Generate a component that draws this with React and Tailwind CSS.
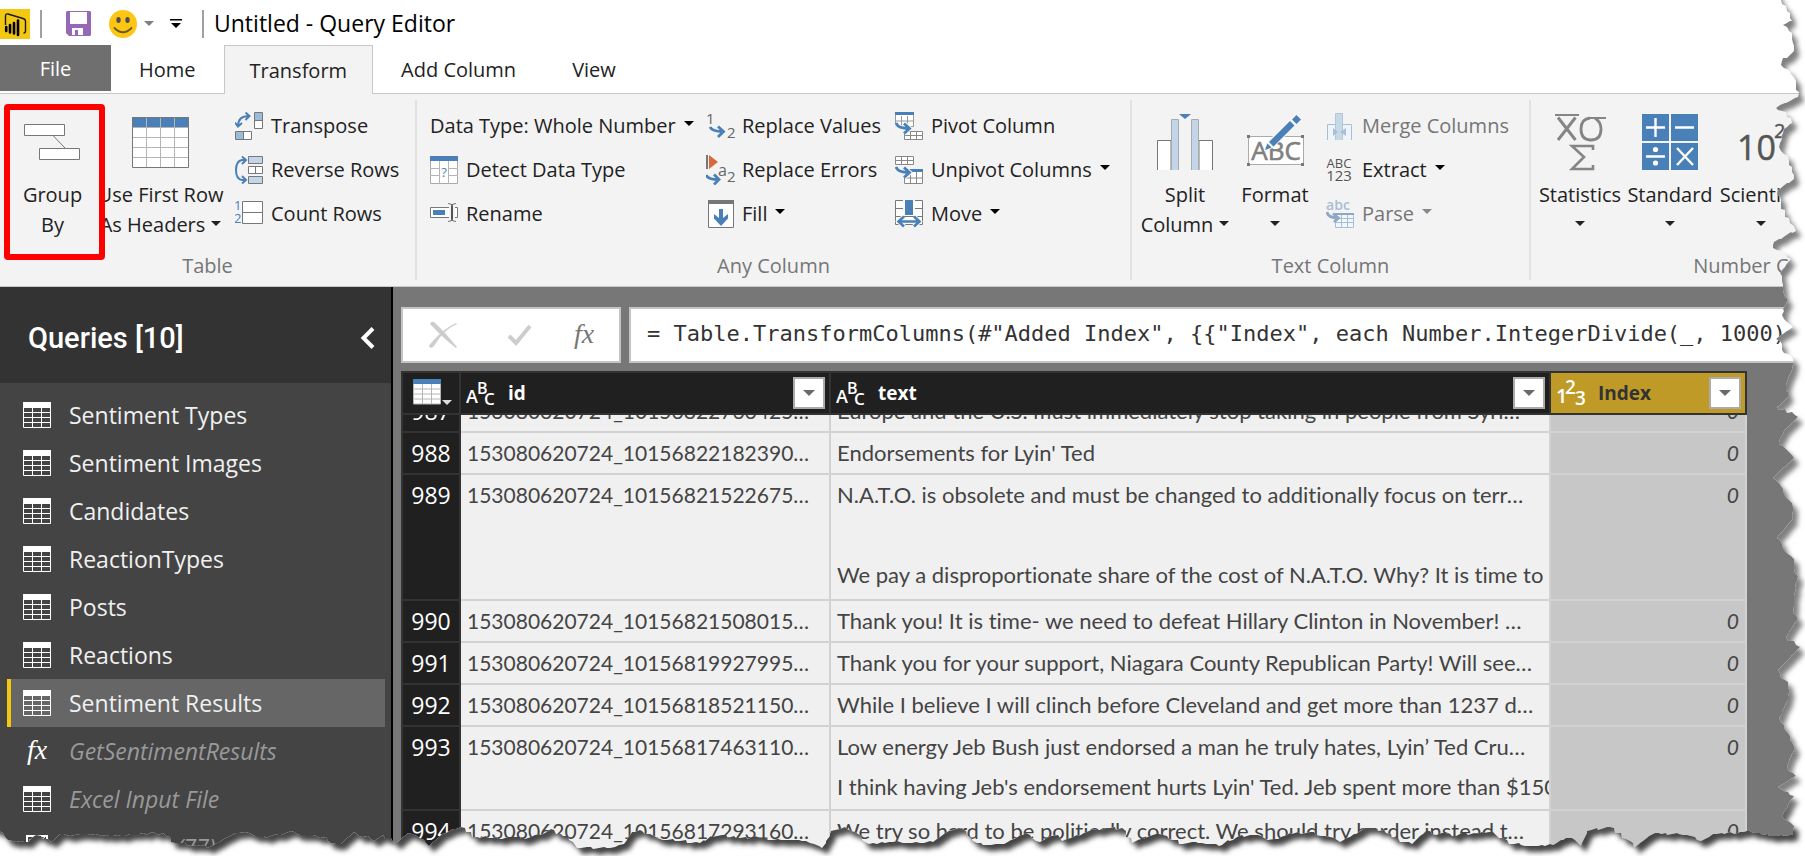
import React from 'react';

const queries = [
  { name: 'Sentiment Types', kind: 'table' },
  { name: 'Sentiment Images', kind: 'table' },
  { name: 'Candidates', kind: 'table' },
  { name: 'ReactionTypes', kind: 'table' },
  { name: 'Posts', kind: 'table' },
  { name: 'Reactions', kind: 'table' },
  { name: 'Sentiment Results', kind: 'table', selected: true },
  { name: 'GetSentimentResults', kind: 'function', disabled: true },
  { name: 'Excel Input File', kind: 'table', disabled: true },
  { name: 'Sentiment (77)', kind: 'param', disabled: true },
];

const rows = [
  { n: 987, id: '153080620724_10156822766425…', lines: ['Europe and the U.S. must immediately stop taking in people from Syri…'], size: 'clipped' },
  { n: 988, id: '153080620724_10156822182390…', lines: ["Endorsements for Lyin' Ted"] },
  {
    n: 989,
    id: '153080620724_10156821522675…',
    lines: [
      'N.A.T.O. is obsolete and must be changed to additionally focus on terr…',
      '',
      'We pay a disproportionate share of the cost of N.A.T.O. Why? It is time to renegotiate',
    ],
    size: 'tall',
  },
  { n: 990, id: '153080620724_10156821508015…', lines: ['Thank you! It is time- we need to defeat Hillary Clinton in November! …'] },
  { n: 991, id: '153080620724_10156819927995…', lines: ['Thank you for your support, Niagara County Republican Party! Will see…'] },
  { n: 992, id: '153080620724_10156818521150…', lines: ['While I believe I will clinch before Cleveland and get more than 1237 d…'] },
  {
    n: 993,
    id: '153080620724_10156817463110…',
    lines: [
      'Low energy Jeb Bush just endorsed a man he truly hates, Lyin’ Ted Cru…',
      "I think having Jeb's endorsement hurts Lyin' Ted. Jeb spent more than $150",
    ],
    size: 'double',
  },
  { n: 994, id: '153080620724_10156817293160…', lines: ['We try so hard to be politically correct. We should try harder instead t…'] },
];

const rowHeight = {
  clipped: 'h-4 flex flex-col justify-end',
  single: 'h-10',
  double: 'h-[82px]',
  tall: 'h-[124px]',
};

/* ---------- torn paper edge ---------- */

const rightEdge = [
  [1775, -12], [1788, 10], [1793, 20], [1783, 25], [1789, 31], [1793, 38], [1795, 50], [1788, 57], [1782, 59],
  [1781, 65], [1792, 73], [1797, 80], [1798, 97], [1777, 107], [1785, 113], [1793, 122], [1785, 128], [1779, 147],
  [1790, 160], [1793, 180], [1777, 190], [1782, 208], [1790, 223], [1797, 230], [1775, 241], [1774, 247],
  [1792, 258], [1780, 273], [1783, 290], [1787, 300], [1782, 315], [1793, 327], [1777, 338], [1785, 352],
  [1795, 362], [1787, 380], [1788, 397], [1777, 407], [1798, 417], [1785, 430], [1778, 445], [1795, 457],
  [1773, 478], [1785, 493], [1793, 507], [1792, 520], [1778, 537], [1793, 560], [1797, 577], [1793, 607],
  [1797, 620], [1786, 637], [1799, 648], [1778, 670], [1789, 687], [1788, 700], [1780, 717], [1788, 733],
  [1794, 750], [1787, 767], [1797, 775], [1778, 787], [1793, 797], [1783, 815], [1793, 827],
];

const bottomEdge = [
  [1793, 835], [1763, 835], [1752, 831], [1713, 834], [1702, 840], [1680, 833], [1650, 835], [1635, 847],
  [1623, 837], [1610, 827], [1588, 830], [1582, 845], [1567, 837], [1553, 845], [1537, 847], [1510, 843],
  [1493, 832], [1453, 835], [1425, 832], [1413, 842], [1400, 842], [1387, 832], [1367, 828], [1357, 833],
  [1340, 842], [1313, 833], [1290, 833], [1277, 840], [1253, 835], [1237, 837], [1220, 845], [1203, 842],
  [1180, 843], [1160, 833], [1133, 842], [1122, 828], [1093, 830], [1080, 835], [1063, 840], [1053, 835],
  [1040, 842], [1027, 832], [1017, 837], [1003, 845], [977, 843], [963, 828], [950, 830], [933, 842],
  [900, 842], [870, 843], [848, 828], [832, 830], [823, 847], [807, 840], [790, 840], [757, 838], [713, 836],
  [700, 843], [653, 837], [643, 830], [632, 832], [623, 845], [603, 848], [578, 847], [567, 837], [550, 830],
  [530, 838], [507, 838], [477, 837], [460, 828], [443, 833], [430, 845], [408, 833], [397, 843], [383, 835],
  [373, 842], [367, 837], [353, 833], [340, 845], [317, 835], [290, 832], [267, 837], [240, 832], [227, 837],
  [212, 846], [200, 846], [175, 843], [163, 833], [110, 835], [60, 834], [52, 841], [37, 834], [28, 842],
  [12, 842], [0, 830], [-10, 826],
];

// breaks every long segment into short ones and roughens them a little
function roughen(points) {
  const out = [];
  let seed = 7;
  for (let i = 0; i < points.length - 1; i++) {
    const [x1, y1] = points[i];
    const [x2, y2] = points[i + 1];
    const steps = Math.max(1, Math.round(Math.hypot(x2 - x1, y2 - y1) / 4));
    for (let s = 0; s < steps; s++) {
      seed = (seed * 73 + 41) % 997;
      const jitter = ((seed % 100) / 100 - 0.5) * 3;
      const t = s / steps;
      out.push([Math.round(x1 + (x2 - x1) * t + jitter), Math.round(y1 + (y2 - y1) * t - jitter)]);
    }
  }
  out.push(points[points.length - 1]);
  return out;
}

const paper = 'M-10 -12L' + roughen([...rightEdge, ...bottomEdge]).map((p) => p.join(' ')).join('L') + 'Z';
const outside = 'M-20 -20H1825V876H-20Z' + paper;

function TornEdge() {
  return (
    <svg
      className="pointer-events-none absolute inset-0 z-20 h-full w-full"
      viewBox="0 0 1805 856"
      preserveAspectRatio="none"
      aria-hidden="true"
    >
      <defs>
        <clipPath id="outside">
          <path d={outside} clipRule="evenodd" />
        </clipPath>
        <filter id="soft" x="-2%" y="-2%" width="104%" height="104%">
          <feGaussianBlur stdDeviation="2.5" />
        </filter>
        {/* lighter shadow down the side, darker along the bottom */}
        <linearGradient id="shade" gradientUnits="userSpaceOnUse" x1="0" y1="790" x2="0" y2="830">
          <stop offset="0" stopColor="#808080" />
          <stop offset="1" stopColor="#454545" />
        </linearGradient>
      </defs>
      <path d={outside} fill="#fff" fillRule="evenodd" />
      <g clipPath="url(#outside)">
        <path d={paper} fill="url(#shade)" transform="translate(5 6)" filter="url(#soft)" />
      </g>
    </svg>
  );
}

/* ---------- icons ---------- */

function Caret({ className = 'text-black' }) {
  return (
    <svg width="10" height="5" viewBox="0 0 10 5" className={`shrink-0 ${className}`} aria-hidden="true">
      <path d="M0 0H10L5 5Z" fill="currentColor" />
    </svg>
  );
}

function Icon({ children, w = 28, h = 28 }) {
  return (
    <svg width={w} height={h} viewBox={`0 0 ${w} ${h}`} className="shrink-0" fill="none" aria-hidden="true">
      {children}
    </svg>
  );
}

const FONT = 'Open Sans, sans-serif';

function PowerBiLogo() {
  return (
    <Icon w={30} h={30}>
      <path d="M0 0H30V30H0Z" fill="#f2c811" />
      <path d="M5.500 16V7q0-2.500 2.500-2L23 9.500q2.500.7 2.500 3V22q0 2-2 2" stroke="#1a1a1a" strokeWidth="1.400" />
      <path d="M6.200 18V22M10 16V23.500M14 14V24.500M18 11.500V26" stroke="#000" strokeWidth="2.600" strokeLinecap="round" />
    </Icon>
  );
}

function SaveIcon() {
  return (
    <Icon w={25} h={25}>
      <path d="M1 0H24l1 1V24l-1 1H3L0 22V1Z" fill="#9668b8" />
      <path d="M4 1H21V13H4Z" fill="#fff" />
      <path d="M6 17H17V24H6Z" fill="#fff" />
      <path d="M9 19H12V24H9Z" fill="#9668b8" />
    </Icon>
  );
}

function SmileyIcon() {
  return (
    <Icon>
      <circle cx="14" cy="14" r="14" fill="#fdc614" />
      <ellipse cx="9.500" cy="10" rx="2.200" ry="3" fill="#4d4d4d" />
      <ellipse cx="18.500" cy="10" rx="2.200" ry="3" fill="#4d4d4d" />
      <path d="M5.500 18Q14 26.500 22.500 18" stroke="#6b5a1c" strokeWidth="1.800" strokeLinecap="round" />
    </Icon>
  );
}

function GroupByIcon() {
  return (
    <Icon w={57} h={37}>
      <path d="M29.500 12L41 24" stroke="#777" />
      <path d="M.5 .5H40.500V11.500H.5ZM15.500 24.500H55.500V35.500H15.500Z" fill="#fff" stroke="#777" />
    </Icon>
  );
}

function HeadersIcon() {
  return (
    <Icon w={57} h={51}>
      <path d="M.5 .5H56.500V50.500H.5Z" fill="#fff" />
      <path d="M0 0H57V10H0Z" fill="#4a80b8" />
      <path d="M14.500 0V50M28.500 0V50M42.500 0V50M0 20.500H57M0 30.500H57M0 40.500H57M0 10.500H57" stroke="#b5b5b5" />
      <path d="M.5 .5H56.500V50.500H.5Z" stroke="#777" />
    </Icon>
  );
}

function TransposeIcon() {
  return (
    <Icon>
      <path d="M3 14Q3 4 14 4M10.500 .5L14.500 4L10.500 8M0 10.500L3 14.500L7 11" stroke="#4a80b8" strokeWidth="2" />
      <path d="M19.500 .5H27.500V16.500H19.500Z" fill="#fff" stroke="#777" />
      <path d="M20 1H27V8H20Z" fill="#9bbcd8" />
      <path d="M20 8.500H27" stroke="#777" />
      <path d="M.5 19.500H16.500V27.500H.5Z" fill="#fff" stroke="#777" />
      <path d="M1 20H8V27H1Z" fill="#9bbcd8" />
      <path d="M8.500 20V27" stroke="#777" />
    </Icon>
  );
}

function ReverseIcon() {
  return (
    <Icon>
      <path d="M10 4H7Q1 5 1 14Q1 23 7 24H10M7 .5L11 4L7 8M7 20L11 24L7 27.500" stroke="#4a80b8" strokeWidth="2" />
      <path d="M13.500 .5H27.500V7.500H13.500ZM13.500 20.500H27.500V27.500H13.500Z" fill="#c3d6e9" stroke="#777" />
      <path d="M13.500 10.500H27.500V17.500H13.500ZM20.500 10V17" fill="#fff" stroke="#777" />
    </Icon>
  );
}

function CountIcon() {
  return (
    <Icon>
      <text x="-1" y="10" fontSize="13" fill="#4a80b8" fontFamily={FONT}>1</text>
      <text x="-1" y="23" fontSize="13" fill="#4a80b8" fontFamily={FONT}>2</text>
      <path d="M7.500 1.500H27.500V23.500H7.500ZM7 12.500H28" fill="#fff" stroke="#777" />
    </Icon>
  );
}

function DetectIcon() {
  return (
    <Icon>
      <path d="M.5 .5H27.500V27.500H.5Z" fill="#fff" stroke="#aaa" />
      <path d="M9.500 4V28M18.500 4V28M0 12.500H28M0 19.500H28" stroke="#b5b5b5" />
      <path d="M10 9H18V23H10Z" fill="#fff" />
      <path d="M0 0H28V5H0Z" fill="#4a80b8" />
      <text x="14" y="21" fontSize="13" textAnchor="middle" fill="#4a80b8" fontFamily={FONT}>?</text>
    </Icon>
  );
}

function RenameIcon() {
  return (
    <Icon>
      <path d="M.5 7.500H27.500V17.500H.5Z" fill="#fff" stroke="#777" />
      <path d="M3 10H15V15H3Z" fill="#4a80b8" />
      <path d="M19 5H25V20H19Z" fill="#f3f3f3" />
      <path d="M22 4V21" stroke="#555" strokeWidth="2" />
      <path d="M18 3.500Q22 3.500 22 6Q22 3.500 26 3.500M18 21.500Q22 21.500 22 19Q22 21.500 26 21.500" stroke="#777" />
    </Icon>
  );
}

function ReplaceValuesIcon() {
  return (
    <Icon w={30} h={28}>
      <text x="0" y="12" fontSize="15" fill="#666" fontFamily={FONT}>1</text>
      <text x="21" y="26" fontSize="15" fill="#666" fontFamily={FONT}>2</text>
      <path d="M4 15Q6 19.500 17 19.500M12 14.500L17.500 19.500L12 25" stroke="#4a80b8" strokeWidth="2.800" />
    </Icon>
  );
}

function ReplaceErrorsIcon() {
  return (
    <Icon w={30} h={30}>
      <path d="M1 0V14" stroke="#777" strokeWidth="2" />
      <path d="M3 0L12 7L3 14Z" fill="#d9683c" />
      <text x="12" y="21" fontSize="16" fill="#666" fontFamily={FONT}>a</text>
      <text x="21" y="27" fontSize="15" fill="#666" fontFamily={FONT}>2</text>
      <path d="M0 20Q2 24.500 12 24.500M8 19.500L13 24.500L8 29.500" stroke="#4a80b8" strokeWidth="2.800" />
    </Icon>
  );
}

function FillIcon() {
  return (
    <Icon w={28} h={30}>
      <path d="M2.500 1.500H27.500V28.500H2.500Z" fill="#fff" stroke="#777" />
      <path d="M2 1H28V5H2Z" fill="#777" />
      <path d="M13 10H17V19L22 15V19.500L15 27L8 19.500V15L13 19Z" fill="#4a80b8" />
    </Icon>
  );
}

function PivotIcon() {
  return (
    <Icon>
      <path d="M.5 .5H18.500V14.500H.5ZM.5 9H18M6.500 4V14M12.500 4V14" fill="#fff" stroke="#999" />
      <path d="M0 0H19V3H0Z" fill="#4a80b8" />
      <path d="M9.500 19.500H27.500V27.500H9.500ZM9 23.500H27M15.500 19V27M21.500 19V27" fill="#fff" stroke="#888" />
      <path d="M1 11Q3 16.500 14 16.500M9 11.500L14.500 16.500L9 21.500" stroke="#f3f3f3" strokeWidth="5" />
      <path d="M1 11Q3 16.500 14 16.500M9 11.500L14.500 16.500L9 21.500" stroke="#4a80b8" strokeWidth="2.800" />
    </Icon>
  );
}

function UnpivotIcon() {
  return (
    <Icon>
      <path d="M.5 .5H18.500V8.500H.5ZM0 4.500H18M6.500 0V8M12.500 0V8" fill="#fff" stroke="#888" />
      <path d="M9.500 13.500H27.500V27.500H9.500ZM9 22H27M15.500 15V27M21.500 15V27" fill="#fff" stroke="#888" />
      <path d="M9 13H28V16H9Z" fill="#4a80b8" />
      <path d="M1 11Q3 16.500 14 16.500M9 11.500L14.500 16.500L9 21.500" stroke="#f3f3f3" strokeWidth="5" />
      <path d="M1 11Q3 16.500 14 16.500M9 11.500L14.500 16.500L9 21.500" stroke="#4a80b8" strokeWidth="2.800" />
    </Icon>
  );
}

function MoveIcon() {
  return (
    <Icon>
      <path d="M.5 .5H27.500V24.500H.5ZM0 8.500H28M0 16.500H28" fill="#fff" stroke="#777" />
      <path d="M8 0H20V15H8Z" fill="#fff" />
      <path d="M10 0H18V15H10Z" fill="#4a80b8" />
      <path d="M2 21.500H26M9 16.500L3.500 21.500L9 26.500M19 16.500L24.500 21.500L19 26.500" stroke="#f8f8f8" strokeWidth="4.500" />
      <path d="M3 21.500H25M9 16.500L3.500 21.500L9 26.500M19 16.500L24.500 21.500L19 26.500" stroke="#4a80b8" strokeWidth="2.600" />
    </Icon>
  );
}

function SplitIcon() {
  return (
    <Icon w={56} h={56}>
      <path d="M.5 56V26.500H14V56M55.500 56V26.500H42V56" fill="#fff" stroke="#777" />
      <path d="M14.500 56V5.500H21.500V56M34.500 56V5.500H41.500V56" fill="#c3d6e9" stroke="#aaa" />
      <path d="M22 0H34L28 5Z" fill="#4a80b8" />
    </Icon>
  );
}

function FormatIcon() {
  return (
    <Icon w={58} h={56}>
      <path d="M2.500 22.500H57.500V50.500H2.500Z" fill="#fff" stroke="#aaa" />
      <path d="M1 21H4V24H1ZM55 21H58V24H55ZM1 49H4V52H1ZM55 49H58V52H55Z" fill="#777" />
      <text x="30" y="46" fontSize="26" textAnchor="middle" fill="#808080" stroke="#808080" strokeWidth=".6" fontFamily={FONT}>ABC</text>
      <path d="M18 37L21 28L47 2L54 8L27 34Z" fill="#f6f6f6" />
      <path d="M19 36L21.500 29.500L25.500 33.500ZM23 28L44 7L48.500 11.500L27.500 32.500ZM46 5.500L50.500 1L55 5.500L50.500 10Z" fill="#4a80b8" />
    </Icon>
  );
}

function MergeIcon() {
  return (
    <Icon>
      <path d="M1.500 28V12.500H25.500V28" fill="#edf5fb" stroke="#a9bdd6" />
      <path d="M9.500 28V1.500H16.500V28" fill="#c8d9e6" stroke="#b4c8dc" />
      <path d="M7 16L12 20L7 24ZM20 16L14 20L20 24Z" fill="#a9bfda" />
    </Icon>
  );
}

function ExtractIcon() {
  return (
    <Icon>
      <text x="13" y="12" fontSize="13" textAnchor="middle" fill="#555" fontFamily={FONT}>ABC</text>
      <text x="13" y="25" fontSize="15" textAnchor="middle" fill="#555" fontFamily={FONT}>123</text>
    </Icon>
  );
}

function ParseIcon() {
  return (
    <Icon>
      <text x="12" y="10" fontSize="14" fontWeight="600" textAnchor="middle" fill="#a9bdd6" fontFamily={FONT}>abc</text>
      <path d="M9.500 13.500H27.500V27.500H9.500ZM9 18.500H27M9 22.500H27M15.500 15V27M21.500 15V27" fill="#f0f8fd" stroke="#a9bdd6" />
      <path d="M9 13H28V15H9Z" fill="#8fa6c6" />
      <path d="M1 12Q2 18 12 18M7 13.500L12.500 18L8 22" stroke="#8fa6c6" strokeWidth="2.800" />
    </Icon>
  );
}

function StatisticsIcon() {
  return (
    <Icon w={54} h={58}>
      <path d="M2 2H26M37 5H53" stroke="#858585" strokeWidth="2" />
      <path d="M5 4.500L22.500 27M22.500 4.500L5 27" stroke="#858585" strokeWidth="3" />
      <path d="M37 5Q28 6 28 16Q28 27 38 27Q48 27 48 16Q48 9 42 5" stroke="#858585" strokeWidth="2.800" />
      <path d="M40 37V33H19L31 44L19 56H40V52" stroke="#858585" strokeWidth="2.600" />
    </Icon>
  );
}

function StandardIcon() {
  return (
    <Icon w={56} h={56}>
      <path d="M0 0H27V27H0ZM29 0H56V27H29ZM0 29H27V56H0ZM29 29H56V56H29Z" fill="#4a80b8" />
      <path d="M4 13.500H23M13.500 4V23M33 13.500H52M4 42.500H23M35 34L51 51M51 34L35 51" stroke="#fff" strokeWidth="2.400" />
      <circle cx="13.500" cy="35.500" r="2.600" fill="#fff" />
      <circle cx="13.500" cy="49" r="2.600" fill="#fff" />
    </Icon>
  );
}

function ScientificIcon() {
  return (
    <Icon w={56} h={56}>
      <text x="4" y="46" fontSize="34" fill="#555" stroke="#555" strokeWidth=".5" fontFamily={FONT}>10</text>
      <text x="41" y="24" fontSize="20" fill="#555" stroke="#555" strokeWidth=".4" fontFamily={FONT}>2</text>
    </Icon>
  );
}

function QueryTableIcon() {
  return (
    <Icon w={28} h={26}>
      <path d="M.5 .5H27.500V25.500H.5ZM9.500 5V25M18.500 5V25M0 10.500H28M0 15.500H28M0 20.500H28" stroke="#fff" />
      <path d="M0 0H28V6H0Z" fill="#fff" />
    </Icon>
  );
}

function FxIcon({ color }) {
  return (
    <Icon w={28} h={30}>
      <text x="4" y="23" fontSize="28" fontStyle="italic" fill={color} fontFamily="Liberation Serif, serif">fx</text>
    </Icon>
  );
}

function ParamIcon() {
  return (
    <Icon w={28} h={26}>
      <path d="M4 2H24V24H4Z" fill="#444" stroke="#fff" strokeWidth="2" />
      <path d="M6 6H14M14 9L22 3" stroke="#fff" />
    </Icon>
  );
}

function TypeIcon({ numeric }) {
  const [a, b, c] = numeric ? ['1', '2', '3'] : ['A', 'B', 'C'];
  return (
    <Icon w={30} h={28}>
      <text x="0" y="24" fontSize={numeric ? 20 : 18} fontWeight="600" fill="#fff" fontFamily={FONT}>{a}</text>
      <text x={numeric ? 9 : 11} y="15" fontSize={numeric ? 19 : 16} fontWeight="600" fill="#fff" fontFamily={FONT}>{b}</text>
      <text x={numeric ? 19 : 18} y="26" fontSize={numeric ? 19 : 17} fontWeight="600" fill="#fff" fontFamily={FONT}>{c}</text>
    </Icon>
  );
}

/* ---------- ribbon ---------- */

function RibbonGroup({ label, className, inner = '', children }) {
  return (
    <section className={`flex shrink-0 flex-col pt-2.5 pb-1.5 ${className}`}>
      <div className={`flex h-[132px] items-start ${inner}`}>{children}</div>
      <h2 className="mt-4 text-center leading-7 text-[#767676]">{label}</h2>
    </section>
  );
}

function Divider() {
  return <div className="my-1.5 w-0.5 shrink-0 bg-[#e2e2e2]" />;
}

function SmallButton({ icon, label, caret, disabled, gap = 'gap-2' }) {
  return (
    <button
      type="button"
      disabled={disabled}
      className={`flex h-11 items-center whitespace-nowrap ${gap} ${disabled ? 'text-[#767676]' : 'text-[#222]'}`}
    >
      {icon}
      <span className="flex items-center gap-2">
        {label}
        {caret && <Caret className={`mb-1.5 ${disabled ? 'text-[#888]' : 'text-black'}`} />}
      </span>
    </button>
  );
}

function LargeButton({ icon, first, second, caret, className }) {
  return (
    <button type="button" className={`flex shrink-0 flex-col items-center whitespace-nowrap leading-[30px] text-[#222] ${className}`}>
      <span className="flex h-[76px] items-center">{icon}</span>
      <span>{first}</span>
      <span className="flex h-[30px] items-center gap-1.5">
        {second}
        {caret && <Caret className="mb-1" />}
      </span>
    </button>
  );
}

function Ribbon() {
  return (
    <div className="flex shrink-0 overflow-hidden border-y border-[#c8c8c8] bg-[#f3f3f3] text-[20px]">
      <RibbonGroup label="Table" className="w-[415px]">
        <div className="relative z-10">
          <LargeButton icon={<GroupByIcon />} first="Group" second="By" className="w-[105px]" />
          {/* highlight around the command */}
          <div className="absolute top-0 left-1 h-[156px] w-[101px] rounded-sm border-[6px] border-[#ff0000]" />
        </div>
        <LargeButton icon={<HeadersIcon />} first="Use First Row" second="As Headers" caret className="w-[111px]" />
        <div className="ml-[19px]">
          <SmallButton icon={<TransposeIcon />} label="Transpose" />
          <SmallButton icon={<ReverseIcon />} label="Reverse Rows" />
          <SmallButton icon={<CountIcon />} label="Count Rows" />
        </div>
      </RibbonGroup>
      <Divider />
      <RibbonGroup label="Any Column" className="w-[713px]" inner="pl-[13px]">
        <div className="w-[276px]">
          <SmallButton label="Data Type: Whole Number" caret />
          <SmallButton icon={<DetectIcon />} label="Detect Data Type" />
          <SmallButton icon={<RenameIcon />} label="Rename" />
        </div>
        <div className="w-[189px]">
          <SmallButton icon={<ReplaceValuesIcon />} label="Replace Values" gap="gap-1.5" />
          <SmallButton icon={<ReplaceErrorsIcon />} label="Replace Errors" gap="gap-1.5" />
          <SmallButton icon={<FillIcon />} label="Fill" caret />
        </div>
        <div>
          <SmallButton icon={<PivotIcon />} label="Pivot Column" />
          <SmallButton icon={<UnpivotIcon />} label="Unpivot Columns" caret />
          <SmallButton icon={<MoveIcon />} label="Move" caret />
        </div>
      </RibbonGroup>
      <Divider />
      <RibbonGroup label="Text Column" className="w-[397px]">
        <LargeButton icon={<SplitIcon />} first="Split" second="Column" caret className="w-[106px]" />
        <LargeButton icon={<FormatIcon />} first="Format" caret className="w-[74px]" />
        <div className="ml-[14px]">
          <SmallButton icon={<MergeIcon />} label="Merge Columns" disabled />
          <SmallButton icon={<ExtractIcon />} label="Extract" caret />
          <SmallButton icon={<ParseIcon />} label="Parse" caret disabled />
        </div>
      </RibbonGroup>
      <Divider />
      <RibbonGroup label="Number Column" className="w-[480px]" inner="pl-1">
        <LargeButton icon={<StatisticsIcon />} first="Statistics" caret className="w-[90px]" />
        <LargeButton icon={<StandardIcon />} first="Standard" caret className="w-[90px]" />
        <LargeButton icon={<ScientificIcon />} first="Scientific" caret className="w-[92px]" />
      </RibbonGroup>
    </div>
  );
}

/* ---------- data grid ---------- */

function FilterButton({ label }) {
  return (
    <button
      type="button"
      aria-label={`Filter ${label}`}
      className="ml-auto flex h-8 w-8 shrink-0 items-center justify-center border-2 border-[#ababab] bg-white"
    >
      <svg width="12" height="6" viewBox="0 0 12 6" aria-hidden="true">
        <path d="M0 0H12L6 6Z" fill="#6a6a6a" />
      </svg>
    </button>
  );
}

function HeaderCell({ name, numeric }) {
  return (
    <th className={`border-2 border-[#333] p-0 ${numeric ? 'bg-[#bf9a26] text-[#333]' : 'bg-[#202020] text-white'}`}>
      <div className="flex h-10 items-center pr-1 pl-[5px] text-[19px] font-bold">
        <TypeIcon numeric={numeric} />
        <span className="ml-3">{name}</span>
        <FilterButton label={name} />
      </div>
    </th>
  );
}

function DataGrid() {
  return (
    <table className="ml-2 w-[1345px] table-fixed border-collapse">
      <colgroup>
        <col className="w-[58px]" />
        <col className="w-[370px]" />
        <col className="w-[720px]" />
        <col className="w-[196px]" />
      </colgroup>
      <thead>
        <tr>
          <th className="border-2 border-[#333] bg-[#202020] p-0">
            <button type="button" aria-label="Table options" className="flex h-10 items-end gap-px pb-2 pl-2.5">
              <Icon w={28} h={26}>
                <path d="M0 0H28V25H0Z" fill="#fff" />
                <path d="M.5 5V25H27.500V5M9.500 5V25M18.500 5V25M0 10H28M0 15H28M0 20H28" stroke="#b5b5b5" />
                <path d="M0 0H28V5H0Z" fill="#4a80b8" />
              </Icon>
              <Caret className="text-[#ddd]" />
            </button>
          </th>
          <HeaderCell name="id" />
          <HeaderCell name="text" />
          <HeaderCell name="Index" numeric />
        </tr>
      </thead>
      <tbody className="font-['Lato',sans-serif] text-[21px] leading-10 text-[#444] [font-variant-ligatures:none]">
        {rows.map((row) => {
          const height = rowHeight[row.size || 'single'];
          return (
            <tr key={row.n}>
              <th scope="row" className="border-2 border-[#333] bg-[#202020] p-0 font-['Open_Sans',sans-serif] text-[23px] font-normal text-white">
                <div className={`overflow-hidden ${height}`}>
                  <div>{row.n}</div>
                </div>
              </th>
              <td className="border-2 border-[#d2d2d2] bg-[#f0f0f0] p-0">
                <div className={`overflow-hidden pl-1.5 whitespace-nowrap ${height}`}>
                  <div>{row.id}</div>
                </div>
              </td>
              <td className="border-2 border-[#d2d2d2] bg-[#f0f0f0] p-0 text-[22px]">
                <div className={`overflow-hidden pl-1.5 whitespace-nowrap ${height}`}>
                  {row.lines.map((line, i) => (
                    <div key={i} className="h-10">{line}</div>
                  ))}
                </div>
              </td>
              <td className="border-2 border-[#d2d2d2] bg-[#c7c7c7] p-0 text-right italic">
                <div className={`overflow-hidden pr-1.5 ${height}`}>
                  <div>0</div>
                </div>
              </td>
            </tr>
          );
        })}
      </tbody>
    </table>
  );
}

/* ---------- page ---------- */

function QueryItem({ query }) {
  return (
    <li className="pr-1.5 pl-[7px]">
      <a
        href="#"
        className={`flex h-12 items-center gap-[18px] border-l-4 pl-3 text-[23px] ${
          query.selected ? 'border-[#f2c811] bg-[#666]' : 'border-transparent'
        } ${query.disabled ? 'text-[#999] italic' : 'text-[#f0f0f0]'}`}
      >
        {query.kind === 'table' && <QueryTableIcon />}
        {query.kind === 'function' && <FxIcon color="#fff" />}
        {query.kind === 'param' && <ParamIcon />}
        <span>{query.name}</span>
      </a>
    </li>
  );
}

export default function App() {
  return (
    <div className="relative flex h-screen flex-col overflow-hidden bg-white font-['Open_Sans',sans-serif]">
      <header className="flex h-[45px] shrink-0 items-center pt-0.5">
        <PowerBiLogo />
        <div className="ml-2.5 h-7 w-0.5 bg-[#a0a0a0]" />
        <button type="button" aria-label="Save" className="ml-6">
          <SaveIcon />
        </button>
        <button type="button" aria-label="Send feedback" className="ml-[18px] flex items-center gap-[7px]">
          <SmileyIcon />
          <Caret className="text-[#808080]" />
        </button>
        <button type="button" aria-label="Customize toolbar" className="ml-4">
          <Icon w={12} h={10}>
            <path d="M0 0H12V1.500H0ZM1 4H11L6 9Z" fill="#000" />
          </Icon>
        </button>
        <div className="ml-5 h-7 w-0.5 bg-[#a0a0a0]" />
        <h1 className="ml-2.5 text-[23px] text-black">Untitled - Query Editor</h1>
      </header>

      <nav className="flex h-12 shrink-0 text-[20px] text-[#222]">
        <button type="button" className="h-[46px] w-[111px] bg-[#6f6f6f] pt-0.5 text-white">File</button>
        <button type="button" className="px-7 pt-0.5">Home</button>
        <button type="button" className="relative z-10 -mb-px border border-b-0 border-[#c8c8c8] bg-[#f3f3f3] px-[25px] pt-0.5">Transform</button>
        <button type="button" className="px-7 pt-0.5">Add Column</button>
        <button type="button" className="px-7 pt-0.5">View</button>
      </nav>

      <Ribbon />

      <main className="flex min-h-0 flex-1">
        <aside className="w-[393px] shrink-0 border-r-2 border-black bg-[#444]">
          <div className="flex h-24 items-center justify-between bg-[#333] pr-4 pb-0.5 pl-7 text-white">
            <h2 className="pt-2.5 font-['Roboto',sans-serif] text-[29px] font-medium">Queries [10]</h2>
            <button type="button" aria-label="Collapse queries" className="pt-2">
              <Icon w={15} h={22}>
                <path d="M13 1.500L3.500 11L13 20.500" stroke="#fff" strokeWidth="4" />
              </Icon>
            </button>
          </div>
          <ul className="pt-2">
            {queries.map((q) => (
              <QueryItem key={q.name} query={q} />
            ))}
          </ul>
        </aside>

        <div className="min-w-0 flex-1 overflow-hidden bg-[#777] pt-5">
          <div className="mb-2 flex gap-2 pl-2">
            <div className="flex h-14 w-[220px] shrink-0 items-center border-2 border-[#c4c4c4] bg-white pl-[26px]">
              <button type="button" aria-label="Cancel">
                <Icon w={29} h={28}>
                  <path d="M1 3Q2 0 5 1Q15 10 28 26L27 27Q15 18 1 3Z" fill="#cdcdcd" />
                  <path d="M28 3Q15 8 5 25Q3 28 0 26Q0 24 3 21Q14 8 27 2Z" fill="#cdcdcd" />
                </Icon>
              </button>
              <button type="button" aria-label="Commit" className="ml-[49px]">
                <Icon w={25} h={24}>
                  <path d="M2 13L9 20L23 3" stroke="#cdcdcd" strokeWidth="4" />
                </Icon>
              </button>
              <button type="button" aria-label="Insert step" className="ml-[38px]">
                <FxIcon color="#777" />
              </button>
            </div>
            <input
              type="text"
              aria-label="Formula"
              readOnly
              value={'= Table.TransformColumns(#"Added Index", {{"Index", each Number.IntegerDivide(_, 1000)'}
              className="h-14 min-w-0 flex-1 border-2 border-[#c4c4c4] bg-white pb-1 pl-4 font-['DejaVu_Sans_Mono',monospace] text-[22px] text-[#333] outline-none"
            />
          </div>
          <DataGrid />
        </div>
      </main>

      <TornEdge />
    </div>
  );
}
